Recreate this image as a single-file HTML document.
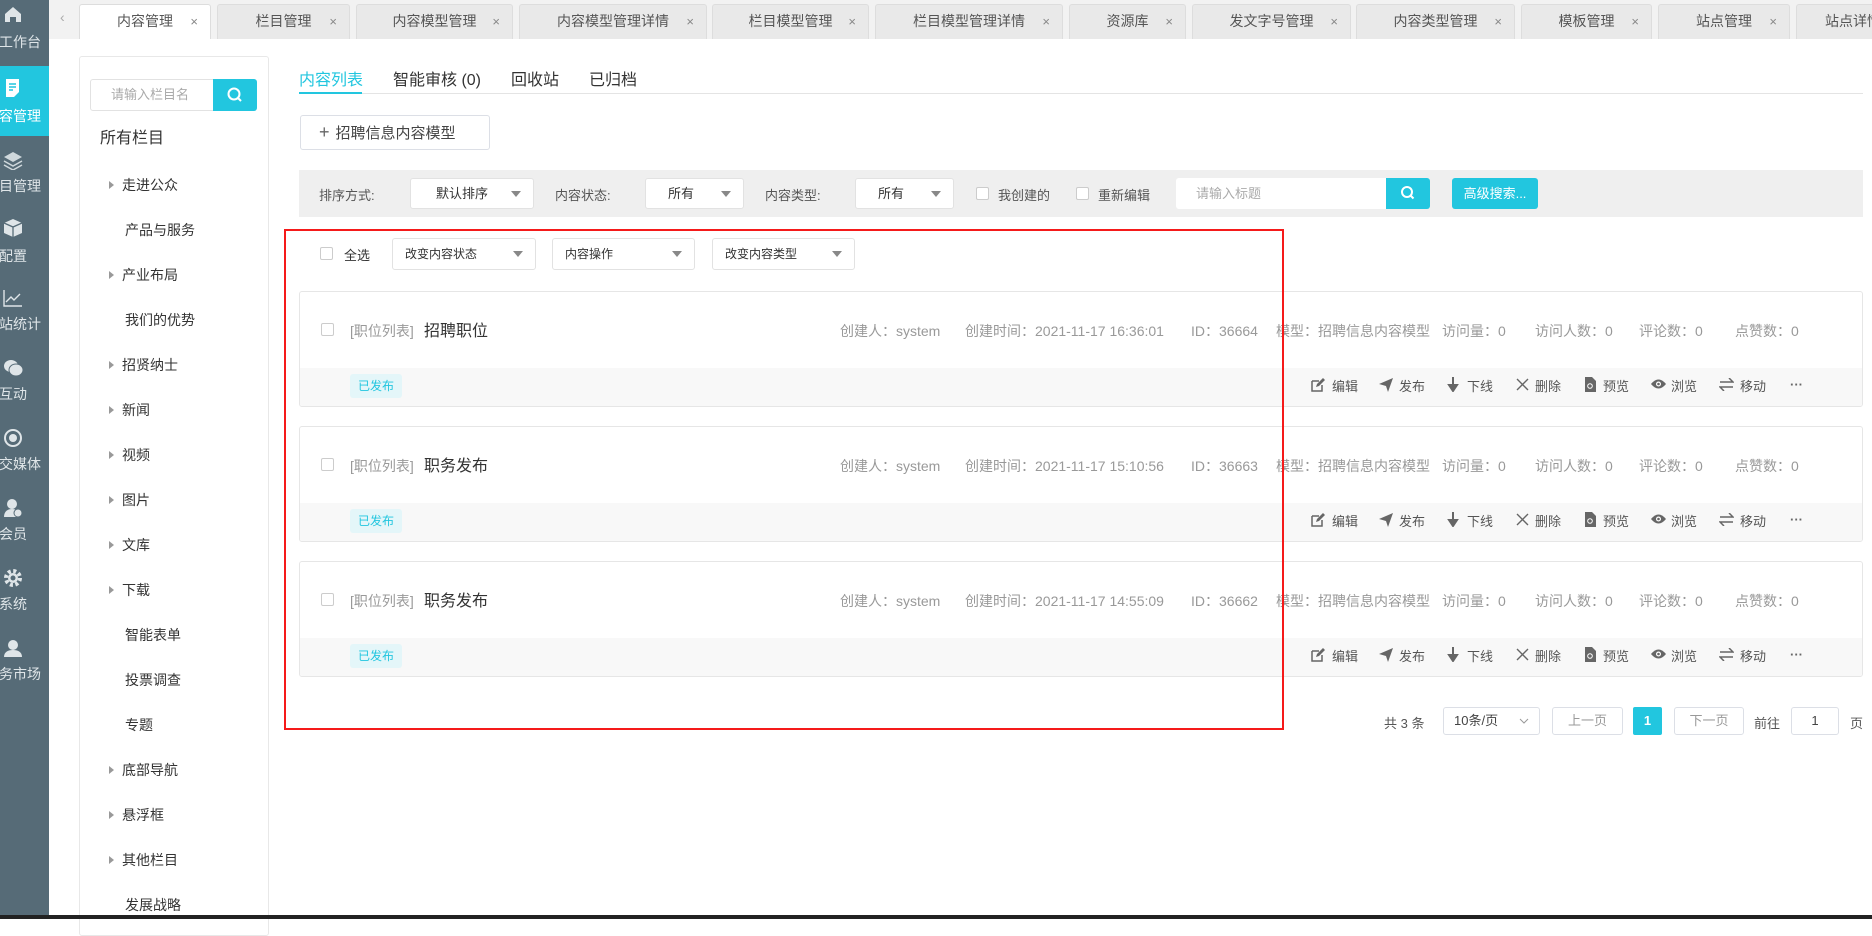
<!DOCTYPE html>
<html><head><meta charset="utf-8"><style>
*{box-sizing:border-box;margin:0;padding:0}
body{width:1872px;height:919px;overflow:hidden;background:#fff;font-family:"Liberation Sans","Noto Sans CJK SC",sans-serif;color:#333;position:relative}
.a{position:absolute;white-space:nowrap}
.sb{left:0;top:0;width:49px;height:919px;background:#566b77}
.sbi{left:0;width:49px;height:70px;color:#dfe5e8;font-size:14px}
.sbi .ic{position:absolute;left:3px;top:9px;width:20px;height:20px}
.sbi .tx{position:absolute;left:-1px;top:36px}
.tabbar{left:49px;top:0;width:1823px;height:39px;background:#f2f2f2}
.tab{top:4px;height:35px;background:#e9e9e9;border:1px solid #ddd;border-bottom:none;border-radius:3px 3px 0 0;font-size:14px;color:#555;line-height:33px;text-align:center}
.tab i{font-style:normal;position:absolute;right:12px;top:0;font-size:13px;color:#888}
.panel{left:79px;top:56px;width:190px;height:880px;border:1px solid #e8e8e8;border-radius:3px}
.tree{font-size:14px;color:#333}
.tri{position:absolute;width:0;height:0;border-left:5px solid #999;border-top:4px solid transparent;border-bottom:4px solid transparent}
.sel{border:1px solid #e2e2e2;background:#fff;border-radius:3px;font-size:13px;color:#333;padding-left:12px}
.dd{position:absolute;right:12px;top:50%;margin-top:-3px;border-top:6px solid #888;border-left:5px solid transparent;border-right:5px solid transparent}
.cb{width:13px;height:13px;border:1px solid #ccc;border-radius:2px;background:#fff}
.card{left:299px;width:1564px;height:116px;border:1px solid #e6e6e6;border-radius:3px;overflow:hidden}
.card .strip{position:absolute;left:0;top:76px;width:100%;height:40px;background:#f8f8f8}
.meta{font-size:14px;color:#999}
.act{font-size:13px;color:#555}
.btn{border:1px solid #dcdfe6;border-radius:3px;background:#fff;font-size:13px;color:#999;text-align:center}
</style></head><body>

<div class="a sb"></div>
<div class="a sbi" style="top:0"><svg class="ic" viewBox="0 0 20 20" style="top:4px"><path d="M2 10L10 3l8 7v8h-5v-5H7v5H2z" fill="#dfe5e8"/></svg><span class="tx" style="top:32px">工作台</span></div>
<div class="a sbi" style="top:66px;height:70px;background:#22c6df;color:#fff"><svg class="ic" viewBox="0 0 20 20" style="top:12px"><path d="M3 1h13v13l-5 5H3z" fill="#fff"/><path d="M6 6h7M6 9h7M6 12h4" stroke="#22c6df" stroke-width="1.6"/></svg><span class="tx" style="top:40px">容管理</span></div>
<div class="a sbi" style="top:140px"><svg class="ic" viewBox="0 0 20 20" style="top:10px"><path d="M10 2l9 5-9 5-9-5z" fill="#cfd8dc"/><path d="M1 11l9 5 9-5M1 15l9 5 9-5" stroke="#cfd8dc" stroke-width="1.5" fill="none"/></svg><span class="tx" style="top:36px">目管理</span></div>
<div class="a sbi" style="top:210px"><svg class="ic" viewBox="0 0 20 20" style="top:8px"><path d="M10 1l9 4v10l-9 4-9-4V5z" fill="#dfe5e8"/><path d="M1 5l9 4 9-4M10 9v10" stroke="#566b77" stroke-width="1.3" fill="none"/></svg><span class="tx" style="top:36px">配置</span></div>
<div class="a sbi" style="top:280px"><svg class="ic" viewBox="0 0 20 20" style="top:8px"><path d="M1 2v16h18M3 14l5-5 3 3 6-6" stroke="#dfe5e8" stroke-width="1.4" fill="none"/></svg><span class="tx" style="top:34px">站统计</span></div>
<div class="a sbi" style="top:350px"><svg class="ic" viewBox="0 0 20 20" style="top:8px"><ellipse cx="8" cy="8" rx="7" ry="6" fill="#dfe5e8"/><ellipse cx="13" cy="12" rx="7" ry="6" fill="#dfe5e8" stroke="#566b77"/></svg><span class="tx" style="top:34px">互动</span></div>
<div class="a sbi" style="top:420px"><svg class="ic" viewBox="0 0 20 20" style="top:8px"><circle cx="10" cy="10" r="8" stroke="#dfe5e8" stroke-width="2" fill="none"/><circle cx="10" cy="10" r="4" fill="#dfe5e8"/></svg><span class="tx" style="top:34px">交媒体</span></div>
<div class="a sbi" style="top:490px"><svg class="ic" viewBox="0 0 20 20" style="top:8px"><circle cx="9" cy="6" r="5" fill="#dfe5e8"/><path d="M1 19c0-6 4-8 8-8s8 2 8 8z" fill="#dfe5e8"/><circle cx="15" cy="15" r="4" fill="#dfe5e8" stroke="#566b77"/></svg><span class="tx" style="top:34px">会员</span></div>
<div class="a sbi" style="top:560px"><svg class="ic" viewBox="0 0 20 20" style="top:8px"><circle cx="10" cy="10" r="7" stroke="#dfe5e8" stroke-width="4" stroke-dasharray="3 2.5" fill="none"/><circle cx="10" cy="10" r="5" fill="#dfe5e8"/><circle cx="10" cy="10" r="2.5" fill="#566b77"/></svg><span class="tx" style="top:34px">系统</span></div>
<div class="a sbi" style="top:630px"><svg class="ic" viewBox="0 0 20 20" style="top:8px"><circle cx="10" cy="7" r="5" fill="#dfe5e8"/><path d="M1 19c0-5 4-7 9-7s9 2 9 7z" fill="#dfe5e8"/></svg><span class="tx" style="top:34px">务市场</span></div>

<div class="a tabbar"></div>
<div class="a" style="left:60px;top:9px;color:#aaa;font-size:14px">&lsaquo;</div>
<div class="a tab" style="left:79px;width:132px;background:#fff">内容管理<i>×</i></div>
<div class="a tab" style="left:217px;width:133px">栏目管理<i>×</i></div>
<div class="a tab" style="left:356px;width:157px">内容模型管理<i>×</i></div>
<div class="a tab" style="left:519px;width:188px">内容模型管理详情<i>×</i></div>
<div class="a tab" style="left:712px;width:157px">栏目模型管理<i>×</i></div>
<div class="a tab" style="left:875px;width:188px">栏目模型管理详情<i>×</i></div>
<div class="a tab" style="left:1069px;width:117px">资源库<i>×</i></div>
<div class="a tab" style="left:1192px;width:159px">发文字号管理<i>×</i></div>
<div class="a tab" style="left:1356px;width:159px">内容类型管理<i>×</i></div>
<div class="a tab" style="left:1521px;width:131px">模板管理<i>×</i></div>
<div class="a tab" style="left:1658px;width:132px">站点管理<i>×</i></div>
<div class="a tab" style="left:1796px;width:120px;text-align:left;padding-left:28px">站点详情</div>

<div class="a panel"></div>
<div class="a" style="left:90px;top:79px;width:124px;height:32px;border:1px solid #e2e2e2;border-radius:3px 0 0 3px;font-size:13px;color:#aaa;line-height:30px;padding-left:20px">请输入栏目名</div>
<div class="a" style="left:213px;top:79px;width:44px;height:32px;background:#22c6df;border-radius:0 3px 3px 0"><svg width="44" height="32" viewBox="0 0 44 32"><circle cx="21" cy="15" r="5.5" stroke="#fff" stroke-width="2" fill="none"/><path d="M25 19l3 3" stroke="#fff" stroke-width="2"/></svg></div>
<div class="a" style="left:100px;top:124px;font-size:16px">所有栏目</div>
<div class="tree">
<div class="tri" style="left:109px;top:181px"></div><div class="a" style="left:122px;top:175px">走进公众</div>
<div class="a" style="left:125px;top:220px">产品与服务</div>
<div class="tri" style="left:109px;top:271px"></div><div class="a" style="left:122px;top:265px">产业布局</div>
<div class="a" style="left:125px;top:310px">我们的优势</div>
<div class="tri" style="left:109px;top:361px"></div><div class="a" style="left:122px;top:355px">招贤纳士</div>
<div class="tri" style="left:109px;top:406px"></div><div class="a" style="left:122px;top:400px">新闻</div>
<div class="tri" style="left:109px;top:451px"></div><div class="a" style="left:122px;top:445px">视频</div>
<div class="tri" style="left:109px;top:496px"></div><div class="a" style="left:122px;top:490px">图片</div>
<div class="tri" style="left:109px;top:541px"></div><div class="a" style="left:122px;top:535px">文库</div>
<div class="tri" style="left:109px;top:586px"></div><div class="a" style="left:122px;top:580px">下载</div>
<div class="a" style="left:125px;top:625px">智能表单</div>
<div class="a" style="left:125px;top:670px">投票调查</div>
<div class="a" style="left:125px;top:715px">专题</div>
<div class="tri" style="left:109px;top:766px"></div><div class="a" style="left:122px;top:760px">底部导航</div>
<div class="tri" style="left:109px;top:811px"></div><div class="a" style="left:122px;top:805px">悬浮框</div>
<div class="tri" style="left:109px;top:856px"></div><div class="a" style="left:122px;top:850px">其他栏目</div>
<div class="a" style="left:125px;top:895px">发展战略</div>
</div>

<div class="a" style="left:299px;top:93px;width:1564px;height:1px;background:#e4e4e4"></div>
<div class="a" style="left:299px;top:92px;width:63px;height:2px;background:#22c6df"></div>
<div class="a" style="left:299px;top:66px;font-size:16px;color:#22c6df">内容列表</div>
<div class="a" style="left:393px;top:66px;font-size:16px">智能审核 (0)</div>
<div class="a" style="left:511px;top:66px;font-size:16px">回收站</div>
<div class="a" style="left:589px;top:66px;font-size:16px">已归档</div>

<div class="a" style="left:300px;top:115px;width:190px;height:35px;border:1px solid #dcdfe6;border-radius:3px;font-size:15px;line-height:33px;padding-left:18px;color:#444"><span style="font-size:18px;color:#666;margin-right:6px">+</span>招聘信息内容模型</div>

<div class="a" style="left:299px;top:170px;width:1564px;height:47px;background:#efefef"></div>
<div class="a" style="left:319px;top:185px;font-size:13px;color:#555">排序方式:</div>
<div class="a sel" style="left:410px;top:178px;width:124px;height:31px;line-height:29px;padding-left:25px">默认排序<span class="dd"></span></div>
<div class="a" style="left:555px;top:185px;font-size:13px;color:#555">内容状态:</div>
<div class="a sel" style="left:645px;top:178px;width:99px;height:31px;line-height:29px;padding-left:22px">所有<span class="dd"></span></div>
<div class="a" style="left:765px;top:185px;font-size:13px;color:#555">内容类型:</div>
<div class="a sel" style="left:855px;top:178px;width:99px;height:31px;line-height:29px;padding-left:22px">所有<span class="dd"></span></div>
<div class="a cb" style="left:976px;top:187px"></div><div class="a" style="left:998px;top:185px;font-size:13px;color:#555">我创建的</div>
<div class="a cb" style="left:1076px;top:187px"></div><div class="a" style="left:1098px;top:185px;font-size:13px;color:#555">重新编辑</div>
<div class="a" style="left:1176px;top:178px;width:210px;height:31px;background:#fff;border-radius:3px 0 0 3px;font-size:13px;color:#aaa;line-height:31px;padding-left:20px">请输入标题</div>
<div class="a" style="left:1386px;top:178px;width:44px;height:31px;background:#22c6df;border-radius:0 3px 3px 0"><svg width="44" height="31" viewBox="0 0 44 31"><circle cx="21" cy="14" r="5" stroke="#fff" stroke-width="2" fill="none"/><path d="M24.5 17.5l3 3" stroke="#fff" stroke-width="2"/></svg></div>
<div class="a" style="left:1452px;top:178px;width:86px;height:31px;background:#22c6df;border-radius:3px;font-size:13px;color:#fff;line-height:31px;text-align:center">高级搜索...</div>

<div class="a" style="left:284px;top:229px;width:1000px;height:501px;border:2px solid #f51a1a;z-index:5"></div>
<div class="a cb" style="left:320px;top:247px"></div><div class="a" style="left:344px;top:245px;font-size:13px">全选</div>
<div class="a sel" style="left:392px;top:238px;width:144px;height:32px;line-height:30px;font-size:12px">改变内容状态<span class="dd"></span></div>
<div class="a sel" style="left:552px;top:238px;width:143px;height:32px;line-height:30px;font-size:12px">内容操作<span class="dd"></span></div>
<div class="a sel" style="left:712px;top:238px;width:143px;height:32px;line-height:30px;font-size:12px">改变内容类型<span class="dd"></span></div>

<div class="a card" style="top:291px"><div class="strip"></div>
<div class="a cb" style="left:21px;top:31px"></div>
<div class="a meta" style="left:50px;top:29px">[职位列表]</div><div class="a" style="left:124px;top:25px;font-size:16px">招聘职位</div>
<div class="a meta" style="left:540px;top:29px">创建人：system</div><div class="a meta" style="left:665px;top:29px">创建时间：2021-11-17 16:36:01</div>
<div class="a meta" style="left:891px;top:29px">ID：36664</div><div class="a meta" style="left:976px;top:29px">模型：招聘信息内容模型</div>
<div class="a meta" style="left:1142px;top:29px">访问量：0</div><div class="a meta" style="left:1235px;top:29px">访问人数：0</div><div class="a meta" style="left:1339px;top:29px">评论数：0</div><div class="a meta" style="left:1435px;top:29px">点赞数：0</div>
<div class="a" style="left:50px;top:82px;width:52px;height:24px;background:#e4f6f9;border-radius:3px;color:#22c6df;font-size:12px;line-height:24px;text-align:center">已发布</div>
</div>
<div class="a card" style="top:426px"><div class="strip"></div>
<div class="a cb" style="left:21px;top:31px"></div>
<div class="a meta" style="left:50px;top:29px">[职位列表]</div><div class="a" style="left:124px;top:25px;font-size:16px">职务发布</div>
<div class="a meta" style="left:540px;top:29px">创建人：system</div><div class="a meta" style="left:665px;top:29px">创建时间：2021-11-17 15:10:56</div>
<div class="a meta" style="left:891px;top:29px">ID：36663</div><div class="a meta" style="left:976px;top:29px">模型：招聘信息内容模型</div>
<div class="a meta" style="left:1142px;top:29px">访问量：0</div><div class="a meta" style="left:1235px;top:29px">访问人数：0</div><div class="a meta" style="left:1339px;top:29px">评论数：0</div><div class="a meta" style="left:1435px;top:29px">点赞数：0</div>
<div class="a" style="left:50px;top:82px;width:52px;height:24px;background:#e4f6f9;border-radius:3px;color:#22c6df;font-size:12px;line-height:24px;text-align:center">已发布</div>
</div>
<div class="a card" style="top:561px"><div class="strip"></div>
<div class="a cb" style="left:21px;top:31px"></div>
<div class="a meta" style="left:50px;top:29px">[职位列表]</div><div class="a" style="left:124px;top:25px;font-size:16px">职务发布</div>
<div class="a meta" style="left:540px;top:29px">创建人：system</div><div class="a meta" style="left:665px;top:29px">创建时间：2021-11-17 14:55:09</div>
<div class="a meta" style="left:891px;top:29px">ID：36662</div><div class="a meta" style="left:976px;top:29px">模型：招聘信息内容模型</div>
<div class="a meta" style="left:1142px;top:29px">访问量：0</div><div class="a meta" style="left:1235px;top:29px">访问人数：0</div><div class="a meta" style="left:1339px;top:29px">评论数：0</div><div class="a meta" style="left:1435px;top:29px">点赞数：0</div>
<div class="a" style="left:50px;top:82px;width:52px;height:24px;background:#e4f6f9;border-radius:3px;color:#22c6df;font-size:12px;line-height:24px;text-align:center">已发布</div>
</div>

<div class="act">
<div class="a" style="left:0;top:375px;width:1872px;height:20px">
<svg class="a" style="left:1311px;top:3px" width="14" height="14" viewBox="0 0 14 14"><path d="M1 3h7M1 3v10h10V7" stroke="#666" stroke-width="1.5" fill="none"/><path d="M5 9l1-3 6-6 2 2-6 6z" fill="#666"/></svg><span class="a" style="left:1332px;top:1px">编辑</span>
<svg class="a" style="left:1379px;top:3px" width="14" height="14" viewBox="0 0 14 14"><path d="M0 6L14 0 9 14 7 8z" fill="#666"/></svg><span class="a" style="left:1399px;top:1px">发布</span>
<svg class="a" style="left:1447px;top:2px" width="12" height="15" viewBox="0 0 12 15"><path d="M6 0v11M2 8l4 6 4-6z" stroke="#666" stroke-width="2" fill="#666"/></svg><span class="a" style="left:1467px;top:1px">下线</span>
<svg class="a" style="left:1516px;top:3px" width="13" height="13" viewBox="0 0 13 13"><path d="M1 1l11 11M12 1L1 12" stroke="#666" stroke-width="1.4"/></svg><span class="a" style="left:1535px;top:1px">删除</span>
<svg class="a" style="left:1585px;top:2px" width="11" height="15" viewBox="0 0 11 15"><path d="M0 0h7l4 4v11H0z" fill="#666"/><circle cx="5" cy="9" r="2.3" stroke="#fff" fill="none"/></svg><span class="a" style="left:1603px;top:1px">预览</span>
<svg class="a" style="left:1651px;top:4px" width="15" height="10" viewBox="0 0 15 10"><path d="M0 5q7.5-9 15 0q-7.5 9-15 0z" fill="#666"/><circle cx="7.5" cy="5" r="2.5" fill="#fff"/><circle cx="7.5" cy="5" r="1.3" fill="#666"/></svg><span class="a" style="left:1671px;top:1px">浏览</span>
<svg class="a" style="left:1719px;top:3px" width="15" height="13" viewBox="0 0 15 13"><path d="M1 4h13L10 0M14 9H1l4 4" stroke="#666" stroke-width="1.5" fill="none"/></svg><span class="a" style="left:1740px;top:1px">移动</span>
<span class="a" style="left:1790px;top:2px;font-weight:bold;color:#666">···</span>
</div>
</div>
<div class="act">
<div class="a" style="left:0;top:510px;width:1872px;height:20px">
<svg class="a" style="left:1311px;top:3px" width="14" height="14" viewBox="0 0 14 14"><path d="M1 3h7M1 3v10h10V7" stroke="#666" stroke-width="1.5" fill="none"/><path d="M5 9l1-3 6-6 2 2-6 6z" fill="#666"/></svg><span class="a" style="left:1332px;top:1px">编辑</span>
<svg class="a" style="left:1379px;top:3px" width="14" height="14" viewBox="0 0 14 14"><path d="M0 6L14 0 9 14 7 8z" fill="#666"/></svg><span class="a" style="left:1399px;top:1px">发布</span>
<svg class="a" style="left:1447px;top:2px" width="12" height="15" viewBox="0 0 12 15"><path d="M6 0v11M2 8l4 6 4-6z" stroke="#666" stroke-width="2" fill="#666"/></svg><span class="a" style="left:1467px;top:1px">下线</span>
<svg class="a" style="left:1516px;top:3px" width="13" height="13" viewBox="0 0 13 13"><path d="M1 1l11 11M12 1L1 12" stroke="#666" stroke-width="1.4"/></svg><span class="a" style="left:1535px;top:1px">删除</span>
<svg class="a" style="left:1585px;top:2px" width="11" height="15" viewBox="0 0 11 15"><path d="M0 0h7l4 4v11H0z" fill="#666"/><circle cx="5" cy="9" r="2.3" stroke="#fff" fill="none"/></svg><span class="a" style="left:1603px;top:1px">预览</span>
<svg class="a" style="left:1651px;top:4px" width="15" height="10" viewBox="0 0 15 10"><path d="M0 5q7.5-9 15 0q-7.5 9-15 0z" fill="#666"/><circle cx="7.5" cy="5" r="2.5" fill="#fff"/><circle cx="7.5" cy="5" r="1.3" fill="#666"/></svg><span class="a" style="left:1671px;top:1px">浏览</span>
<svg class="a" style="left:1719px;top:3px" width="15" height="13" viewBox="0 0 15 13"><path d="M1 4h13L10 0M14 9H1l4 4" stroke="#666" stroke-width="1.5" fill="none"/></svg><span class="a" style="left:1740px;top:1px">移动</span>
<span class="a" style="left:1790px;top:2px;font-weight:bold;color:#666">···</span>
</div>
</div>
<div class="act">
<div class="a" style="left:0;top:645px;width:1872px;height:20px">
<svg class="a" style="left:1311px;top:3px" width="14" height="14" viewBox="0 0 14 14"><path d="M1 3h7M1 3v10h10V7" stroke="#666" stroke-width="1.5" fill="none"/><path d="M5 9l1-3 6-6 2 2-6 6z" fill="#666"/></svg><span class="a" style="left:1332px;top:1px">编辑</span>
<svg class="a" style="left:1379px;top:3px" width="14" height="14" viewBox="0 0 14 14"><path d="M0 6L14 0 9 14 7 8z" fill="#666"/></svg><span class="a" style="left:1399px;top:1px">发布</span>
<svg class="a" style="left:1447px;top:2px" width="12" height="15" viewBox="0 0 12 15"><path d="M6 0v11M2 8l4 6 4-6z" stroke="#666" stroke-width="2" fill="#666"/></svg><span class="a" style="left:1467px;top:1px">下线</span>
<svg class="a" style="left:1516px;top:3px" width="13" height="13" viewBox="0 0 13 13"><path d="M1 1l11 11M12 1L1 12" stroke="#666" stroke-width="1.4"/></svg><span class="a" style="left:1535px;top:1px">删除</span>
<svg class="a" style="left:1585px;top:2px" width="11" height="15" viewBox="0 0 11 15"><path d="M0 0h7l4 4v11H0z" fill="#666"/><circle cx="5" cy="9" r="2.3" stroke="#fff" fill="none"/></svg><span class="a" style="left:1603px;top:1px">预览</span>
<svg class="a" style="left:1651px;top:4px" width="15" height="10" viewBox="0 0 15 10"><path d="M0 5q7.5-9 15 0q-7.5 9-15 0z" fill="#666"/><circle cx="7.5" cy="5" r="2.5" fill="#fff"/><circle cx="7.5" cy="5" r="1.3" fill="#666"/></svg><span class="a" style="left:1671px;top:1px">浏览</span>
<svg class="a" style="left:1719px;top:3px" width="15" height="13" viewBox="0 0 15 13"><path d="M1 4h13L10 0M14 9H1l4 4" stroke="#666" stroke-width="1.5" fill="none"/></svg><span class="a" style="left:1740px;top:1px">移动</span>
<span class="a" style="left:1790px;top:2px;font-weight:bold;color:#666">···</span>
</div>
</div>

<div class="a" style="left:1384px;top:713px;font-size:13px;color:#555">共 3 条</div>
<div class="a" style="left:1443px;top:707px;width:97px;height:28px;border:1px solid #dcdfe6;border-radius:3px;font-size:13px;color:#444;line-height:26px;padding-left:10px">10条/页<svg class="a" style="right:10px;top:10px" width="10" height="6" viewBox="0 0 10 6"><path d="M1 1l4 4 4-4" stroke="#999" fill="none"/></svg></div>
<div class="a btn" style="left:1552px;top:707px;width:71px;height:28px;line-height:26px">上一页</div>
<div class="a" style="left:1633px;top:707px;width:29px;height:28px;background:#22c6df;border-radius:2px;color:#fff;font-size:13px;font-weight:bold;text-align:center;line-height:28px">1</div>
<div class="a btn" style="left:1674px;top:707px;width:70px;height:28px;line-height:26px">下一页</div>
<div class="a" style="left:1754px;top:713px;font-size:13px;color:#555">前往</div>
<div class="a btn" style="left:1791px;top:707px;width:48px;height:28px;line-height:26px;color:#444">1</div>
<div class="a" style="left:1850px;top:713px;font-size:13px;color:#555">页</div>

<div class="a" style="left:0;top:915px;width:1872px;height:4px;background:#222"></div>
</body></html>
